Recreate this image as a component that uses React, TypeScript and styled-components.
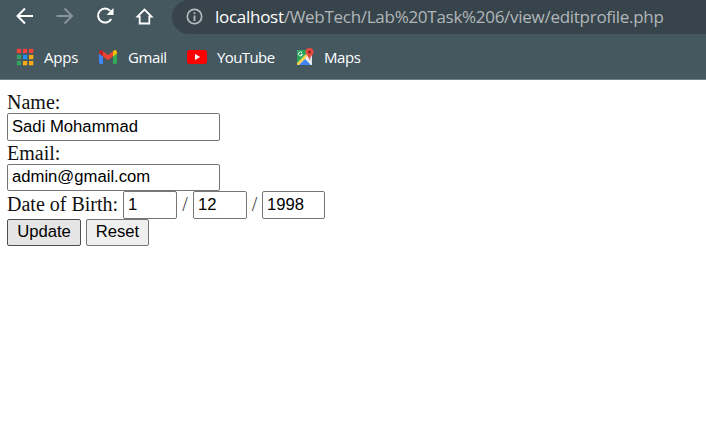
import React from "react";
import styled, { createGlobalStyle } from "styled-components";

const GlobalStyle = createGlobalStyle`
  * { box-sizing: border-box; }
  body { margin: 0; background: #fff; overflow: hidden; }
`;

const Window = styled.div`
  width: 706px;
  height: 442px;
  background: #fff;
  overflow: hidden;
`;

const Chrome = styled.header`
  height: 80px;
  background: #45575f;
  border-bottom: 1px solid #6f818a;
`;

const Toolbar = styled.div`
  display: flex;
  height: 34px;
`;

const NavButtons = styled.nav`
  display: flex;
  gap: 20px;
  width: 172px;
  flex: none;
  padding: 6px 0 0 15px;
`;

const NavIcon = styled.svg<{ $dim?: boolean }>`
  width: 20px;
  height: 20px;
  flex: none;
  fill: none;
  stroke: ${(p) => (p.$dim ? "#87949a" : "#ffffff")};
  stroke-width: 2;
`;

const AddressBar = styled.div`
  display: flex;
  flex: 1;
  height: 34px;
  padding-left: 14px;
  background: #38444b;
  border-radius: 17px 0 0 17px;
`;

const InfoIcon = styled.svg`
  width: 18px;
  height: 18px;
  margin: 7px 11px 0 0;
  flex: none;
`;

const Url = styled.span`
  font: 17px/34px "Open Sans", sans-serif;
  letter-spacing: -0.28px;
  color: #b1b7ba;
  white-space: nowrap;
`;

const Host = styled.span`
  color: #fff;
`;

const Bookmarks = styled.div`
  display: flex;
  height: 45px;
  padding-left: 16px;
`;

const Bookmark = styled.div<{ $width: number; $gap: number; $tracking: number }>`
  display: flex;
  align-items: center;
  gap: ${(p) => p.$gap}px;
  width: ${(p) => p.$width}px;
  flex: none;
  font: 15px/20px "Open Sans", sans-serif;
  letter-spacing: ${(p) => p.$tracking}px;
  color: #fff;
  white-space: nowrap;

  svg { flex: none; }
`;

const Form = styled.form`
  display: flex;
  flex-direction: column;
  align-items: flex-start;
  padding: 10px 7px;
  font: 20px/23px "Liberation Serif", serif;
  color: #111;
`;

const Label = styled.label`
  height: 23px;
  line-height: 25px;
  white-space: pre;
`;

const TextInput = styled.input<{ $width: number; $height?: number }>`
  width: ${(p) => p.$width}px;
  height: ${(p) => p.$height ?? 28}px;
  padding: ${(p) => (p.$height ? "0 4px 2px" : "0 4px")};
  margin: 0;
  border: 1px solid #767676;
  border-radius: 2px;
  outline: none;
  background: #fff;
  font: 16.67px "Liberation Sans", sans-serif;
  color: #000;
`;

const DateRow = styled.div`
  display: flex;
  align-items: center;
  height: 28px;
`;

const DateLabel = styled.label`
  width: 116px;
  padding-bottom: 2px;
  white-space: nowrap;
`;

const Slash = styled.span<{ $width: number }>`
  width: ${(p) => p.$width}px;
  padding-bottom: 2px;
  text-align: center;
  color: #444;
`;

const Actions = styled.div`
  display: flex;
  gap: 5px;
`;

const Button = styled.button<{ $width: number; $hovered?: boolean }>`
  width: ${(p) => p.$width}px;
  height: 27px;
  padding: 0 0 1px;
  border: 1px solid ${(p) => (p.$hovered ? "#4f4f4f" : "#767676")};
  border-radius: 2px;
  background: ${(p) => (p.$hovered ? "#e5e5e5" : "#efefef")};
  font: 16.67px "Liberation Sans", sans-serif;
  color: #000;
`;

const appColors = [
  "#f0443a", "#f0443a", "#f0443a",
  "#34a262", "#2490f0", "#f9ab10",
  "#34a262", "#f9ab10", "#f9ab10",
];

const AppsIcon = () => (
  <svg width="18" height="18" viewBox="0 0 18 18">
    {appColors.map((c, i) => (
      <rect key={i} x={0.8 + (i % 3) * 6.1} y={0.8 + Math.floor(i / 3) * 6.1} width="4.300" height="4.300" fill={c} />
    ))}
  </svg>
);

const GmailIcon = () => (
  <svg width="18" height="14" viewBox="0 0 18 14">
    <path d="M0 3h4v11H1.2A1.2 1.2 0 0 1 0 12.800z" fill="#4285f4" />
    <path d="M14 3h4v9.800a1.200 1.200 0 0 1-1.200 1.200H14z" fill="#34a853" />
    <path d="M4 1.200 9 5l5-3.800v5.300l-5 3.800-5-3.800z" fill="#ea4335" />
    <path d="M0 2.200C0 .2 2.200-.6 3.700.9L4 1.200v5.300L0 3.500z" fill="#c5221f" />
    <path d="M18 2.200c0-2-2.200-2.800-3.700-1.300l-.3.300v5.300l4-3z" fill="#fbbc04" />
  </svg>
);

const YouTubeIcon = () => (
  <svg width="20" height="14" viewBox="0 0 20 14">
    <rect width="20" height="14" rx="3" fill="#f00" />
    <path d="m8 4 5.200 3L8 10z" fill="#fff" />
  </svg>
);

const MapsIcon = () => (
  <svg width="18" height="18" viewBox="0 0 18 18">
    <path d="M1 2h15v15H1z" fill="#dfe3e5" />
    <path d="M1 3a1 1 0 0 1 1-1h13L1 16z" fill="#25a45a" />
    <path d="m1 15 9-9 2 2-9 9H1z" fill="#fbd34c" />
    <path d="m3 17 6-6 6 6z" fill="#4285f4" />
    <path d="m9 10 2-2 5 6v3h-1z" fill="#e8eaec" />
    <path d="M6 4.700a2 2 0 1 0 .4 1.700H4.900" fill="none" stroke="#fff" strokeWidth="1" />
    <path d="M13.500 0A4 4 0 0 0 9.600 4c0 2.800 3.300 4 3.900 8.500C14.100 8 17.500 6.800 17.500 4a4 4 0 0 0-4-4z" fill="#e94b40" />
    <circle cx="13.500" cy="4" r="1.500" fill="#8a2620" />
  </svg>
);

export default function App() {
  return (
    <Window>
      <GlobalStyle />
      <Chrome>
        <Toolbar>
          <NavButtons>
            <NavIcon viewBox="0 0 20 20"><path d="M18 10H3M10 2.500 2.500 10l7.500 7.500" /></NavIcon>
            <NavIcon viewBox="0 0 20 20" $dim><path d="M1.500 10h15M9.500 2.500 17 10l-7.500 7.500" /></NavIcon>
            <NavIcon viewBox="0 0 20 20">
              <path d="M15.300 4.900A7 7 0 1 0 16.200 13" />
              <path d="M18.500 2v7h-7z" fill="#fff" stroke="none" />
            </NavIcon>
            <NavIcon viewBox="0 0 20 20"><path d="M2.500 10.700h2.200V17.500h9.600v-6.800h2.200L9.500 3.600z" strokeWidth="1.800" /></NavIcon>
          </NavButtons>
          <AddressBar>
            <InfoIcon viewBox="0 0 18 18">
              <circle cx="8.500" cy="9.500" r="7.200" fill="none" stroke="#b4babd" strokeWidth="1.700" />
              <path d="M7.600 8.500h1.800V14H7.600zM7.600 5.300h1.800v1.800H7.600z" fill="#b4babd" />
            </InfoIcon>
            <Url><Host>localhost</Host>/WebTech/Lab%20Task%206/view/editprofile.php</Url>
          </AddressBar>
        </Toolbar>
        <Bookmarks>
          <Bookmark $width={83} $gap={10} $tracking={-0.2}><AppsIcon />Apps</Bookmark>
          <Bookmark $width={88} $gap={11} $tracking={-0.4}><GmailIcon />Gmail</Bookmark>
          <Bookmark $width={109} $gap={10} $tracking={-0.6}><YouTubeIcon />YouTube</Bookmark>
          <Bookmark $width={80} $gap={10} $tracking={-0.4}><MapsIcon />Maps</Bookmark>
        </Bookmarks>
      </Chrome>
      <Form onSubmit={(e) => e.preventDefault()}>
        <Label>Name:</Label>
        <TextInput $width={213} defaultValue="Sadi Mohammad" />
        <Label>Email:</Label>
        <TextInput $width={213} $height={27} defaultValue="admin@gmail.com" />
        <DateRow>
          <DateLabel>Date of Birth:</DateLabel>
          <TextInput $width={54} defaultValue="1" />
          <Slash $width={16}>/</Slash>
          <TextInput $width={54} defaultValue="12" />
          <Slash $width={15}>/</Slash>
          <TextInput $width={63} defaultValue="1998" />
        </DateRow>
        <Actions>
          <Button type="submit" $width={74} $hovered>Update</Button>
          <Button type="reset" $width={63}>Reset</Button>
        </Actions>
      </Form>
    </Window>
  );
}
